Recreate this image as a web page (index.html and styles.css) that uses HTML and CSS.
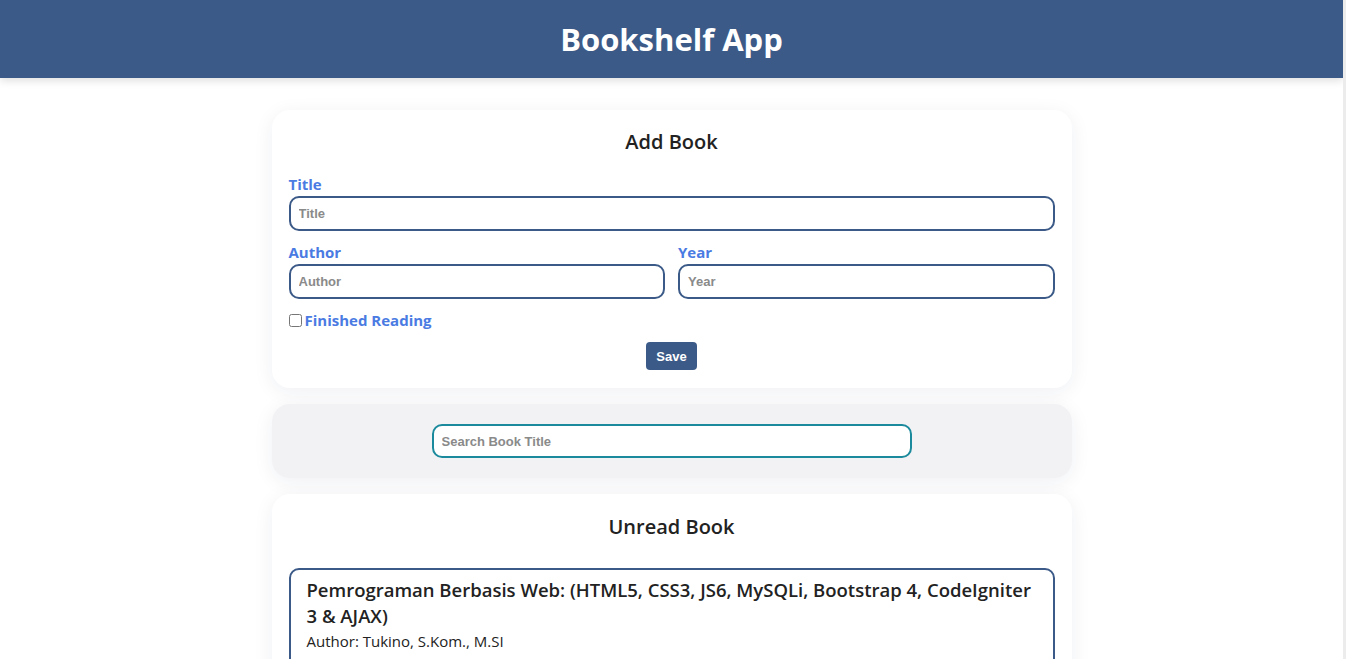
FILE: index.html
```html
<!DOCTYPE html>
<html lang="en">
<head>
<meta charset="utf-8">
<title>Bookshelf App</title>
<link rel="stylesheet" href="styles.css">
</head>
<body>
<header class="app-header">
  <h1 class="app-title">Bookshelf App</h1>
</header>
<main class="container">
  <section class="card add-card">
    <h2 class="card-title">Add Book</h2>
    <form class="book-form">
      <div class="field">
        <label class="field-label" for="title">Title</label>
        <input class="field-input" id="title" type="text" placeholder="Title">
      </div>
      <div class="field-row">
        <div class="field">
          <label class="field-label" for="author">Author</label>
          <input class="field-input" id="author" type="text" placeholder="Author">
        </div>
        <div class="field">
          <label class="field-label" for="year">Year</label>
          <input class="field-input" id="year" type="text" placeholder="Year">
        </div>
      </div>
      <div class="check-row">
        <input class="check-box" id="finished" type="checkbox">
        <label class="field-label check-label" for="finished">Finished Reading</label>
      </div>
      <div class="actions">
        <button class="save-btn" type="button">Save</button>
      </div>
    </form>
  </section>
  <section class="card search-card">
    <input class="search-input" type="text" placeholder="Search Book Title">
  </section>
  <section class="card list-card">
    <h2 class="card-title">Unread Book</h2>
    <article class="book-item">
      <h3 class="book-title">Pemrograman Berbasis Web: (HTML5, CSS3, JS6, MySQLi, Bootstrap 4, CodeIgniter 3 &amp; AJAX)</h3>
      <p class="book-meta">Author: Tukino, S.Kom., M.SI</p>
      <p class="book-meta book-year">Year: 2020</p>
    </article>
  </section>
</main>
</body>
</html>
```
FILE: styles.css
```css
* { box-sizing: border-box; }
html {
  margin: 0;
  padding: 0;
  border-right: 3px solid #ececec;
  background: #ffffff;
}
body {
  margin: 0;
  padding: 0;
  font-family: "Open Sans", "Noto Sans", sans-serif;
  background: #ffffff;
  color: #222222;
}
.app-header {
  height: 78px;
  background: #3b5a87;
  display: flex;
  align-items: center;
  justify-content: center;
  box-shadow: 0 3px 8px rgba(0,0,0,0.12);
}
.app-title {
  margin: 0;
  color: #ffffff;
  font-size: 31px;
  font-weight: 700;
  line-height: 40px;
}
.container {
  width: 800px;
  margin: 32px auto 0;
  display: flex;
  flex-direction: column;
  gap: 16px;
}
.card {
  background: #ffffff;
  border-radius: 18px;
  box-shadow: 0 4px 20px rgba(30,40,80,0.07);
}
.add-card { padding: 17px 17px 18px; }
.card-title {
  margin: 0;
  text-align: center;
  font-size: 20px;
  font-weight: 600;
  line-height: 30px;
  color: #222222;
}
.book-form {
  margin-top: 16px;
  display: flex;
  flex-direction: column;
  gap: 10px;
}
.field { display: flex; flex-direction: column; flex: 1; }
.field-row { display: flex; gap: 13px; }
.field-label {
  color: #4a7be3;
  font-size: 15px;
  font-weight: 700;
  line-height: 22px;
  margin-bottom: 1px;
}
.field-input, .search-input {
  height: 35px;
  border: 2px solid #3b5a87;
  border-radius: 10px;
  padding: 0 8px;
  font-family: "Liberation Sans", Arial, sans-serif;
  font-size: 13px;
  font-weight: 700;
  color: #333;
  background: #fff;
  outline: none;
}
.field-input::placeholder, .search-input::placeholder { color: #8a8a8a; }
.check-row {
  display: flex;
  align-items: center;
  gap: 3px;
  margin-top: 1px;
  height: 20px;
}
.check-box { margin: 0; width: 13px; height: 13px; }
.check-label { margin: 0; }
.actions { display: flex; justify-content: center; margin-top: 2px; }
.save-btn {
  width: 51px;
  height: 28px;
  border: none;
  border-radius: 4px;
  background: #3b5a87;
  color: #fff;
  font-family: "Liberation Sans", Arial, sans-serif;
  font-size: 13px;
  font-weight: 700;
  padding: 0;
}
.search-card {
  background: #f2f2f4;
  padding: 20px;
  display: flex;
  justify-content: center;
}
.search-input {
  width: 480px;
  height: 34px;
  border-color: #1b8a9c;
}
.list-card { padding: 18px 17px 18px; }
.book-item {
  margin-top: 26px;
  border: 2px solid #3b5a87;
  border-radius: 10px;
  padding: 7px 16px 12px;
}
.book-title {
  margin: 0;
  font-size: 18.5px;
  font-weight: 600;
  line-height: 26px;
  color: #222;
}
.book-meta {
  margin: 2px 0 0;
  font-size: 15px;
  line-height: 20px;
  color: #222;
}
.book-year { margin-top: 10px; }
```
